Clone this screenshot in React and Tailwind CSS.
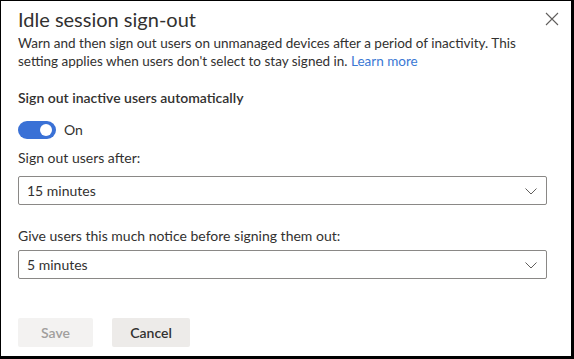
import React from "react";

function Chevron() {
  return (
    <svg width="14" height="14" viewBox="0 0 14 14" fill="none">
      <path d="M1.5 4.5 L7 10 L12.5 4.5" stroke="#605e5c" strokeWidth="1" />
    </svg>
  );
}

function Select({ value }) {
  return (
    <div className="flex h-[29px] w-[529px] items-center justify-between rounded-[2px] border border-[#8a8886] pl-[8px] pr-[8px] text-[14px] leading-[18px] text-[#323130]">
      <span>{value}</span>
      <Chevron />
    </div>
  );
}

export default function App() {
  return (
    <div
      className="relative h-[359px] w-[574px] border-l border-t border-r-[3px] border-b-[3px] border-black bg-white text-[#323130]"
      style={{ fontFamily: 'Lato, "Noto Sans", sans-serif' }}
    >
      <button className="absolute right-[12px] top-[11px] text-[#605e5c]" aria-label="Close">
        <svg width="14" height="14" viewBox="0 0 14 14" fill="none">
          <path d="M1 1 L13 13 M13 1 L1 13" stroke="#605e5c" strokeWidth="1.1" />
        </svg>
      </button>
      <div className="flex flex-col pl-[17px] pt-[4px]">
        <h1 className="text-[20px] leading-[28px] font-normal text-[#323130]">Idle session sign-out</h1>
        <p className="mt-[1px] w-[540px] text-[13.5px] leading-[18px]">
          Warn and then sign out users on unmanaged devices after a period of inactivity. This
          <br />
          setting applies when users don't select to stay signed in.{" "}
          <span className="text-[#3a78d4]">Learn more</span>
        </p>
        <div className="mt-[19px] text-[14px] leading-[18px] font-semibold">Sign out inactive users automatically</div>
        <div className="mt-[14px] flex items-center gap-[8px]">
          <div className="flex h-[18px] w-[38px] items-center justify-end rounded-full bg-[#3a71d6] pr-[4px]">
            <div className="h-[12px] w-[12px] rounded-full bg-white" />
          </div>
          <span className="text-[14px] leading-[18px]">On</span>
        </div>
        <div className="mt-[10px] text-[14px] leading-[18px]">Sign out users after:</div>
        <div className="mt-[9px]">
          <Select value="15 minutes" />
        </div>
        <div className="mt-[22px] text-[14px] leading-[18px]">Give users this much notice before signing them out:</div>
        <div className="mt-[5px]">
          <Select value="5 minutes" />
        </div>
        <div className="mt-[39px] flex gap-[19px]">
          <button className="h-[29px] w-[75px] rounded-[2px] bg-[#f3f2f1] text-[14px] font-semibold text-[#a19f9d]">Save</button>
          <button className="h-[29px] w-[78px] rounded-[2px] bg-[#edebe9] text-[14px] font-semibold text-[#323130]">Cancel</button>
        </div>
      </div>
    </div>
  );
}
